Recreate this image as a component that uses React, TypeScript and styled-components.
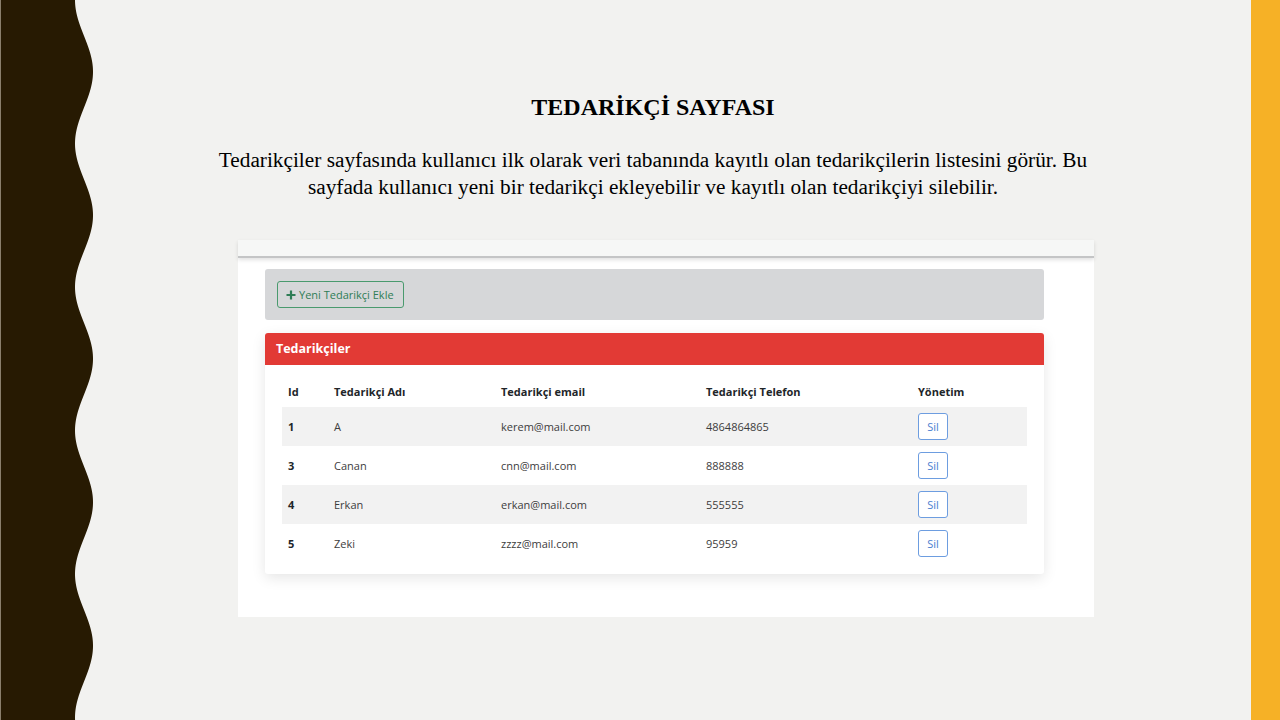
import React from "react";
import styled, { createGlobalStyle } from "styled-components";

const Global = createGlobalStyle`
  html, body { margin: 0; padding: 0; }
  body { width: 1280px; height: 720px; overflow: hidden; background: #f2f2f0; }
  * { box-sizing: border-box; }
`;

const Slide = styled.div`
  width: 1280px;
  height: 720px;
  display: flex;
  background: #f2f2f0;
`;

const WaveCol = styled.div`
  width: 95px;
  height: 720px;
  flex: none;
  svg { display: block; }
`;

const Main = styled.div`
  flex: 1;
  display: flex;
  flex-direction: column;
  padding: 92px 40px 0 0;
`;

const Accent = styled.div`
  width: 29px;
  flex: none;
  height: 720px;
  background: #f6b126;
`;

const Title = styled.h1`
  margin: 0;
  font-family: "Liberation Serif", "Times New Roman", serif;
  font-weight: bold;
  font-size: 24px;
  line-height: 30px;
  color: #000;
  text-align: center;
`;

const Para = styled.p`
  margin: 25px 0 0;
  font-family: "Liberation Serif", "Times New Roman", serif;
  font-size: 21.3px;
  line-height: 27px;
  color: #000;
  text-align: center;
`;

const Shot = styled.div`
  margin: 39px 0 0 143px;
  width: 856px;
  height: 377px;
  background: #fff;
  display: flex;
  flex-direction: column;
`;

const TopBar = styled.div`
  height: 18px;
  background: #f6f7f6;
  border-bottom: 2px solid #c4c5c6;
  box-shadow: 0 2px 4px rgba(0, 0, 0, 0.12);
  position: relative;
  z-index: 1;
`;

const Body = styled.div`
  padding: 11px 50px 0 27px;
  display: flex;
  flex-direction: column;
  gap: 13px;
  font-family: "Open Sans", "Noto Sans", sans-serif;
`;

const ActionPanel = styled.div`
  height: 51px;
  background: #d6d7d9;
  border-radius: 3px;
  padding: 12px 12px;
  display: flex;
  align-items: flex-start;
`;

const AddButton = styled.button`
  height: 27px;
  padding: 0 9px 0 8px;
  border: 1px solid #4a9a6e;
  border-radius: 3px;
  background: transparent;
  color: #2f7d56;
  font-family: "Open Sans", "Noto Sans", sans-serif;
  font-size: 11px;
  display: flex;
  align-items: center;
  gap: 3px;
  svg { display: block; }
`;

const Card = styled.div`
  background: #fff;
  border-radius: 3px;
  box-shadow: 0 4px 14px rgba(0, 0, 0, 0.1);
  overflow: hidden;
`;

const CardHeader = styled.div`
  height: 32px;
  background: #e23a35;
  color: #fff;
  font-weight: bold;
  font-size: 12.5px;
  padding: 0 11px 2px;
  display: flex;
  align-items: center;
`;

const CardBody = styled.div`
  padding: 3px 17px 11px;
`;

const Table = styled.div`
  display: flex;
  flex-direction: column;
`;

const Row = styled.div<{ $striped?: boolean; $head?: boolean }>`
  display: grid;
  grid-template-columns: 46px 167px 205px 212px 115px;
  height: 39px;
  align-items: center;
  padding-top: ${(p) => (p.$head ? "8px" : "0")};
  background: ${(p) => (p.$striped ? "#f2f2f2" : "transparent")};
`;

const HeadCell = styled.div`
  padding-left: 6px;
  font-size: 11px;
  font-weight: bold;
  color: #212529;
`;

const Cell = styled.div<{ $bold?: boolean }>`
  padding-left: 6px;
  font-size: 11px;
  font-weight: ${(p) => (p.$bold ? "bold" : "normal")};
  color: ${(p) => (p.$bold ? "#212529" : "#3d3d3d")};
`;

const DeleteButton = styled.button`
  margin-left: 6px;
  width: 30px;
  height: 27px;
  border: 1px solid #6d9de0;
  border-radius: 3px;
  background: #fff;
  color: #4a7fd0;
  font-family: "Open Sans", "Noto Sans", sans-serif;
  font-size: 11px;
  padding: 0;
`;

const Wave: React.FC = () => {
  const pts: string[] = [];
  for (let y = 0; y <= 720; y += 2) {
    const x = 84 - 9 * Math.cos((2 * Math.PI * y) / 143.5);
    pts.push(`${x.toFixed(2)},${y}`);
  }
  const d = `M0,0 L${pts.join(" L")} L0,720 Z`;
  return (
    <svg width="95" height="720" viewBox="0 0 95 720">
      <path d={d} fill="#271a02" />
      <rect x="0" y="0" width="1" height="720" fill="#8a7f6c" />
    </svg>
  );
};

const rows = [
  { id: "1", name: "A", email: "kerem@mail.com", phone: "4864864865" },
  { id: "3", name: "Canan", email: "cnn@mail.com", phone: "888888" },
  { id: "4", name: "Erkan", email: "erkan@mail.com", phone: "555555" },
  { id: "5", name: "Zeki", email: "zzzz@mail.com", phone: "95959" },
];

export default function App() {
  return (
    <>
      <Global />
      <Slide>
        <WaveCol>
          <Wave />
        </WaveCol>
        <Main>
          <Title>TEDARİKÇİ SAYFASI</Title>
          <Para>
            Tedarikçiler sayfasında kullanıcı ilk olarak veri tabanında kayıtlı olan tedarikçilerin listesini görür. Bu
            <br />
            sayfada kullanıcı yeni bir tedarikçi ekleyebilir ve kayıtlı olan tedarikçiyi silebilir.
          </Para>
          <Shot>
            <TopBar />
            <Body>
              <ActionPanel>
                <AddButton>
                  <svg width="10" height="10" viewBox="0 0 10 10">
                    <path d="M5 0.5 V9.5 M0.5 5 H9.5" stroke="#2f7d56" strokeWidth="2.2" />
                  </svg>
                  Yeni Tedarikçi Ekle
                </AddButton>
              </ActionPanel>
              <Card>
                <CardHeader>Tedarikçiler</CardHeader>
                <CardBody>
                  <Table>
                    <Row $head>
                      <HeadCell>Id</HeadCell>
                      <HeadCell>Tedarikçi Adı</HeadCell>
                      <HeadCell>Tedarikçi email</HeadCell>
                      <HeadCell>Tedarikçi Telefon</HeadCell>
                      <HeadCell>Yönetim</HeadCell>
                    </Row>
                    {rows.map((r, i) => (
                      <Row key={r.id} $striped={i % 2 === 0}>
                        <Cell $bold>{r.id}</Cell>
                        <Cell>{r.name}</Cell>
                        <Cell>{r.email}</Cell>
                        <Cell>{r.phone}</Cell>
                        <div>
                          <DeleteButton>Sil</DeleteButton>
                        </div>
                      </Row>
                    ))}
                  </Table>
                </CardBody>
              </Card>
            </Body>
          </Shot>
        </Main>
        <Accent />
      </Slide>
    </>
  );
}
